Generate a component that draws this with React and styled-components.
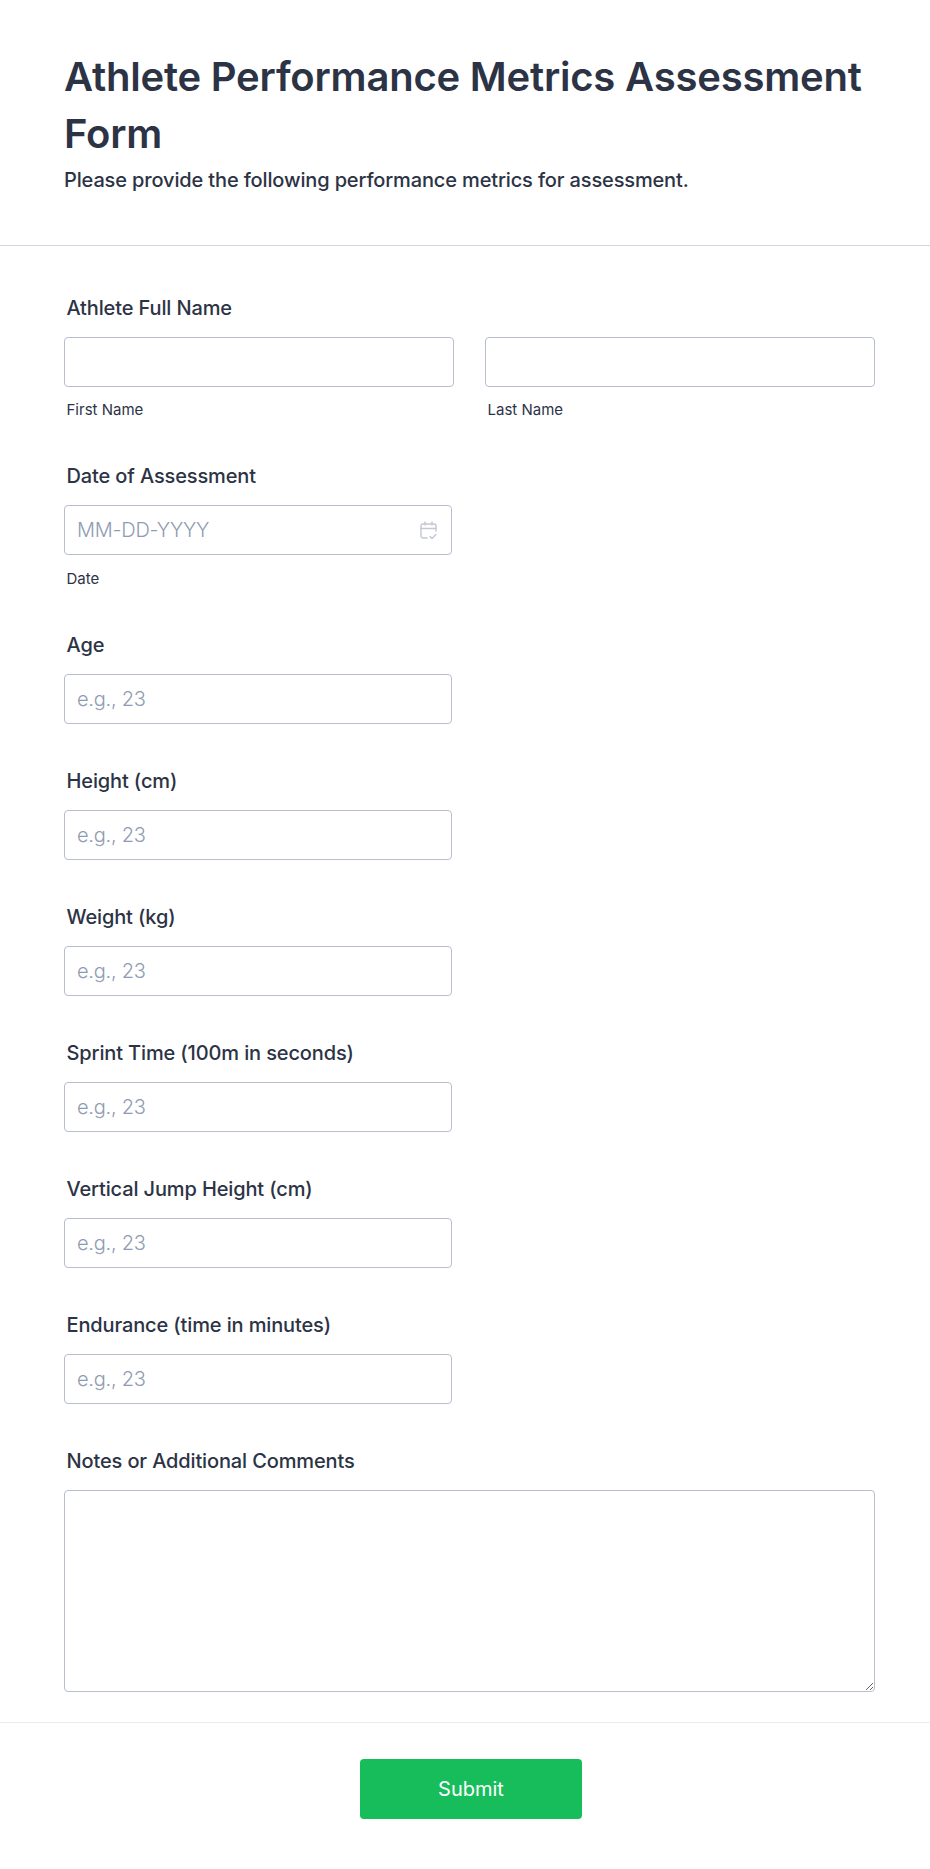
import React from "react";
import styled, { createGlobalStyle } from "styled-components";

const GlobalStyle = createGlobalStyle`
  html, body {
    margin: 0;
    padding: 0;
    background: #fff;
  }

  * {
    box-sizing: border-box;
  }
`;

const Page = styled.form`
  width: 930px;
  height: 1869px;
  font-family: "Inter", "Liberation Sans", sans-serif;
  color: #2c3345;
  background: #fff;
`;

const Header = styled.header`
  height: 246px;
  padding: 48px 50px 0 64px;
  border-bottom: 1px solid #d3d6e2;
`;

const Title = styled.h1`
  margin: 0;
  font-size: 40px;
  line-height: 57px;
  font-weight: 600;
  letter-spacing: -0.2px;
`;

const Subtitle = styled.p`
  margin: 3px 0 0;
  font-size: 20px;
  line-height: 30px;
  font-weight: 500;
  letter-spacing: -0.14px;
`;

const Fields = styled.div`
  padding: 47px 55px 0 64px;
  height: 1476px;
`;

const Field = styled.div`
  margin-bottom: ${(props) => props.$gap || 42}px;
`;

const Label = styled.label`
  display: block;
  padding-left: 2.5px;
  margin-bottom: 14px;
  font-size: 20px;
  line-height: 30px;
  font-weight: 500;
  letter-spacing: -0.13px;
`;

const NameRow = styled.div`
  display: grid;
  grid-template-columns: 390px 390px;
  gap: 31px;
`;

const InputWrap = styled.div`
  position: relative;
  width: ${(props) => props.$width || "388px"};
`;

const Input = styled.input`
  display: block;
  width: 100%;
  height: 50px;
  padding: 0 12px;
  border: 1px solid #b8bdd0;
  border-radius: 4px;
  background: #fff;
  font-family: inherit;
  font-size: 20px;
  font-weight: 300;
  letter-spacing: -0.25px;
  color: #2c3345;
  outline: none;

  &::placeholder {
    color: #8f9bb3;
    opacity: 1;
  }
`;

const CalendarIcon = styled.svg`
  position: absolute;
  top: 16px;
  right: 15px;
  width: 17px;
  height: 19px;
  fill: none;
  stroke: #c3c8d4;
  stroke-width: 1.4;
  stroke-linecap: round;
  stroke-linejoin: round;
`;

const Sublabel = styled.span`
  display: block;
  padding-left: 2.5px;
  margin-top: ${(props) => props.$top || 14}px;
  font-size: 15px;
  line-height: 18px;
`;

const TextArea = styled.textarea`
  display: block;
  width: 811px;
  height: 202px;
  border: 1px solid #b8bdd0;
  border-radius: 4px;
  background: #fff;
  outline: none;
`;

const Footer = styled.footer`
  display: flex;
  justify-content: center;
  padding-top: 36px;
  padding-left: 12px;
  border-top: 1px solid #eaebf2;
`;

const Submit = styled.button`
  width: 222px;
  height: 60px;
  border: 0;
  border-radius: 4px;
  background: #18bd5b;
  color: #fff;
  font-family: inherit;
  font-size: 20px;
  font-weight: 400;
`;

const numberFields = [
  "Age",
  "Height (cm)",
  "Weight (kg)",
  "Sprint Time (100m in seconds)",
  "Vertical Jump Height (cm)",
  "Endurance (time in minutes)",
];

const App = () => {
  return (
    <Page>
      <GlobalStyle />
      <Header>
        <Title>Athlete Performance Metrics Assessment Form</Title>
        <Subtitle>Please provide the following performance metrics for assessment.</Subtitle>
      </Header>

      <Fields>
        <Field>
          <Label>Athlete Full Name</Label>
          <NameRow>
            <div>
              <InputWrap $width="100%">
                <Input type="text" />
              </InputWrap>
              <Sublabel>First Name</Sublabel>
            </div>
            <div>
              <InputWrap $width="100%">
                <Input type="text" />
              </InputWrap>
              <Sublabel>Last Name</Sublabel>
            </div>
          </NameRow>
        </Field>

        <Field>
          <Label>Date of Assessment</Label>
          <InputWrap>
            <Input type="text" placeholder="MM-DD-YYYY" />
            <CalendarIcon viewBox="0 0 17 19">
              <path d="M7 17H3A2 2 0 0 1 1 15V5A2 2 0 0 1 3 3H14A2 2 0 0 1 16 5V10" />
              <path d="M1 7.5H16M5 1V4M12 1V4" />
              <path d="M10 15.5L12 17.5L16 13.5" />
            </CalendarIcon>
          </InputWrap>
          <Sublabel $top={15}>Date</Sublabel>
        </Field>

        {numberFields.map((name) => (
          <Field key={name}>
            <Label>{name}</Label>
            <InputWrap>
              <Input type="text" placeholder="e.g., 23" />
            </InputWrap>
          </Field>
        ))}

        <Field $gap={0}>
          <Label>Notes or Additional Comments</Label>
          <TextArea />
        </Field>
      </Fields>

      <Footer>
        <Submit type="button">Submit</Submit>
      </Footer>
    </Page>
  );
};

export default App;
